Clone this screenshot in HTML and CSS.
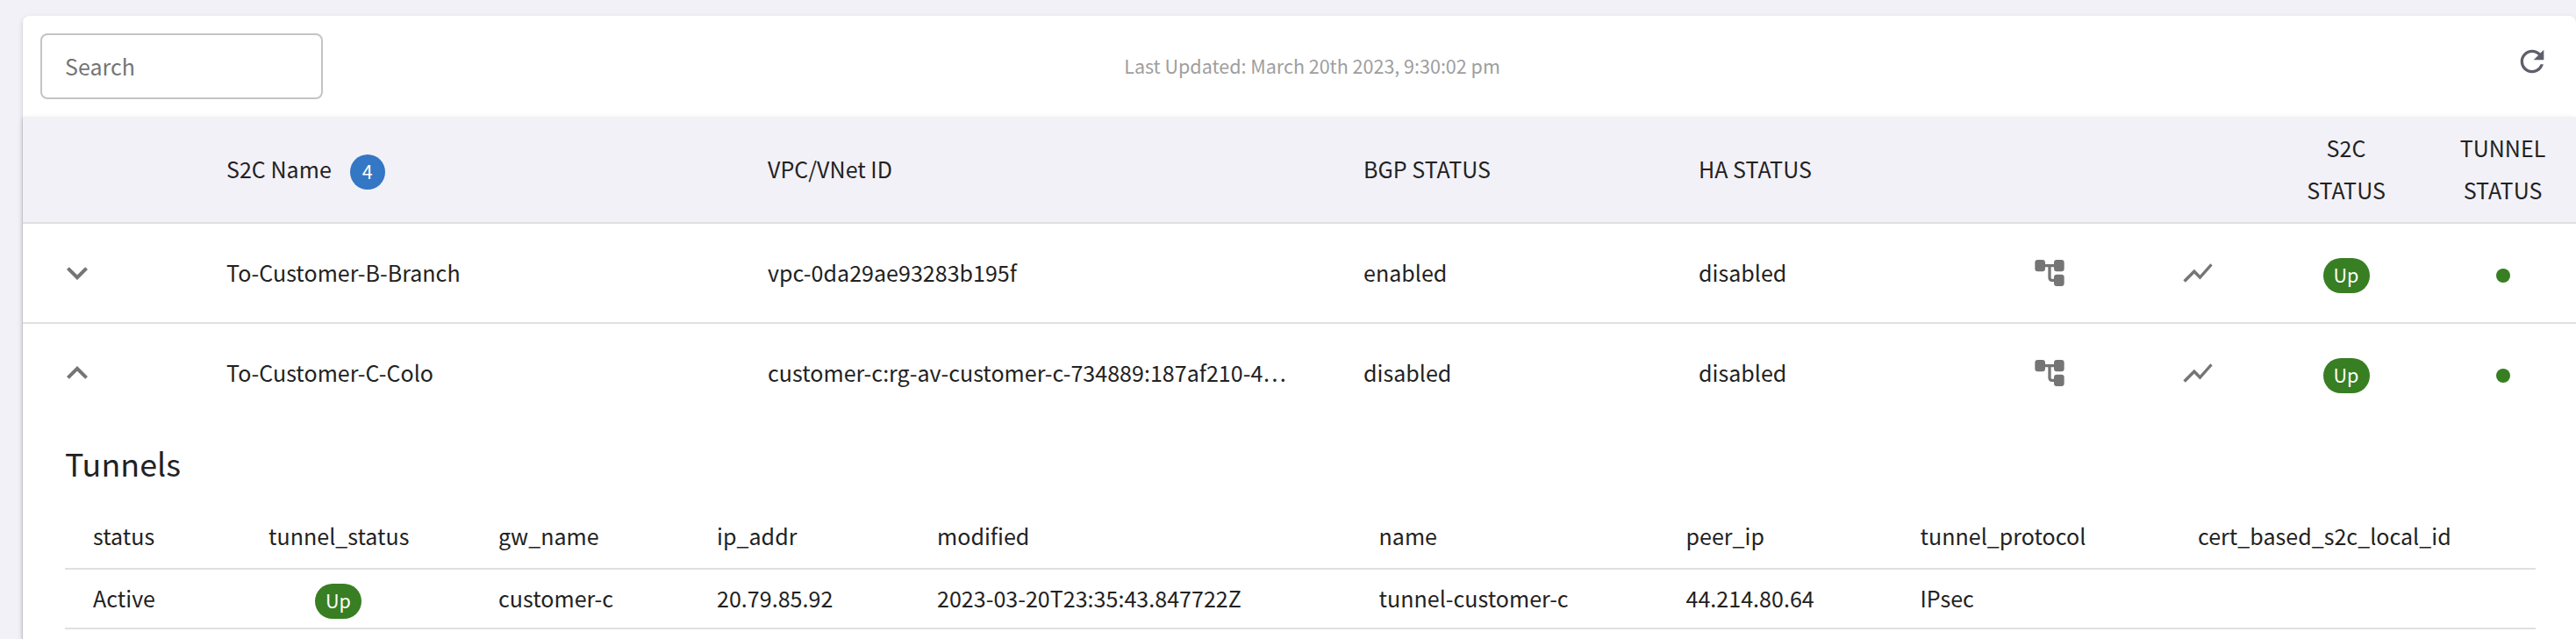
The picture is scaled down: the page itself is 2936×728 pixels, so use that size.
FILE: index.html
```html
<!DOCTYPE html>
<html lang="en">
<head>
<meta charset="utf-8">
<title>Site2Cloud Connections</title>
<link rel="stylesheet" href="styles.css">
</head>
<body>
<svg class="sprite" width="0" height="0" aria-hidden="true">
  <symbol id="tree" viewBox="0 0 24 24"><path d="M22 9.200V4.800C22 3.700 21.300 3 20.200 3h-3.400C15.700 3 15 3.700 15 4.800V6H9V4.800C9 3.700 8.300 3 7.200 3H3.800C2.700 3 2 3.700 2 4.800v4.400C2 10.300 2.700 11 3.800 11h3.400C8.300 11 9 10.300 9 9.200V8h2v7.300C11 16.900 12.100 18 13.700 18H15v1.200c0 1.100.7 1.800 1.800 1.800h3.400c1.100 0 1.800-.7 1.800-1.800v-4.400c0-1.100-.7-1.800-1.800-1.800h-3.400c-1.100 0-1.800.7-1.800 1.800V16h-1.300c-.4 0-.7-.3-.7-.7V8h2v1.200c0 1.100.7 1.800 1.800 1.800h3.400c1.100 0 1.800-.7 1.800-1.800z"/></symbol>
  <symbol id="chart" viewBox="0 0 24 24"><path d="M3.500 18.490l6-6.010 4 4L22 6.920l-1.410-1.410-7.090 7.970-4-4L2 16.990z"/></symbol>
  <symbol id="down" viewBox="0 0 24 24"><path d="M7.410 8.590L12 13.170l4.590-4.580L18 10l-6 6-6-6z"/></symbol>
  <symbol id="up" viewBox="0 0 24 24"><path d="M7.410 15.410L12 10.830l4.590 4.580L18 14l-6-6-6 6z"/></symbol>
  <symbol id="refresh" viewBox="0 0 24 24"><path d="M17.650 6.350C16.200 4.900 14.210 4 12 4c-4.420 0-7.990 3.580-7.990 8s3.570 8 7.990 8c3.730 0 6.840-2.550 7.730-6h-2.080c-.82 2.330-3.040 4-5.650 4-3.310 0-6-2.690-6-6s2.690-6 6-6c1.660 0 3.140.69 4.220 1.780L13 11h7V4z"/></symbol>
</svg>
<main class="card">
  <header class="toolbar">
    <input class="search" type="text" placeholder="Search" aria-label="Search">
    <span class="updated">Last Updated: March 20th 2023, 9:30:02 pm</span>
    <svg class="icon refresh"><use href="#refresh"/></svg>
  </header>
  <section class="table">
    <div class="row head">
      <span></span>
      <span class="name">S2C Name <b class="count">4</b></span>
      <span>VPC/VNet ID</span>
      <span>BGP STATUS</span>
      <span>HA STATUS</span>
      <span></span>
      <span></span>
      <span class="center">S2C<br>STATUS</span>
      <span class="center">TUNNEL<br>STATUS</span>
    </div>
    <div class="row">
      <svg class="chevron"><use href="#down"/></svg>
      <span>To-Customer-B-Branch</span>
      <span class="vpc">vpc-0da29ae93283b195f</span>
      <span>enabled</span>
      <span>disabled</span>
      <svg class="icon"><use href="#tree"/></svg>
      <svg class="icon"><use href="#chart"/></svg>
      <span class="pill">Up</span>
      <i class="dot"></i>
    </div>
    <div class="row open">
      <svg class="chevron"><use href="#up"/></svg>
      <span>To-Customer-C-Colo</span>
      <span class="vpc">customer-c:rg-av-customer-c-734889:187af210-4…</span>
      <span>disabled</span>
      <span>disabled</span>
      <svg class="icon"><use href="#tree"/></svg>
      <svg class="icon"><use href="#chart"/></svg>
      <span class="pill">Up</span>
      <i class="dot"></i>
    </div>
    <div class="detail">
      <h2 class="title">Tunnels</h2>
      <div class="trow thead">
        <span>status</span>
        <span>tunnel_status</span>
        <span>gw_name</span>
        <span>ip_addr</span>
        <span>modified</span>
        <span>name</span>
        <span>peer_ip</span>
        <span>tunnel_protocol</span>
        <span>cert_based_s2c_local_id</span>
      </div>
      <div class="trow">
        <span>Active</span>
        <span class="pill">Up</span>
        <span>customer-c</span>
        <span>20.79.85.92</span>
        <span>2023-03-20T23:35:43.847722Z</span>
        <span>tunnel-customer-c</span>
        <span>44.214.80.64</span>
        <span>IPsec</span>
        <span></span>
      </div>
    </div>
  </section>
</main>
</body>
</html>
```
FILE: styles.css
```css
* { box-sizing: border-box; }

body {
  margin: 0;
  height: 728px;
  overflow: hidden;
  padding: 18px 0 0 26px;
  background: #f2f1f7;
  color: #222;
  font: 25px/48px "Noto Sans CJK SC", "Noto Sans", sans-serif;
  letter-spacing: 0.04px;
}

.sprite { position: absolute; }

.card,
.table {
  background: #fff;
  border-radius: 8px 8px 0 0;
  box-shadow: 0 4px 2px -2px rgba(0, 0, 0, .2), 0 2px 2px rgba(0, 0, 0, .14), 0 2px 6px rgba(0, 0, 0, .12);
}

.card { height: 710px; }
.table { height: 595px; border-radius: 0; }

.toolbar {
  display: grid;
  grid-template-columns: 1fr auto 1fr;
  height: 115px;
  padding: 0 30px 0 20px;
}

.search {
  width: 322px;
  height: 75px;
  margin-top: 20px;
  padding: 0 26px 2px;
  border: 2px solid #c4c4c4;
  border-radius: 8px;
  background: #fff;
  font: inherit;
  letter-spacing: inherit;
  outline: 0;
}

.search::placeholder { color: #757575; opacity: 1; }

.updated {
  margin: 33px 0 0 39px;
  color: #9e9e9e;
  font-size: 21.5px;
  letter-spacing: 0;
}

.icon { width: 40px; height: 40px; fill: #757575; }
.refresh { justify-self: end; margin-top: 32px; fill: #5f5f69; }

.row {
  display: grid;
  grid-template-columns: 232px 617px 679px 382px 380px 169px 89px 200px 157px;
  align-items: center;
  height: 114px;
  border-bottom: 2px solid #e0e0e0;
}

.row > span,
.trow > span { padding-bottom: 2px; }

.row.open { height: 112px; border: 0; }
.row.head { height: 122px; background: #f2f1f7; }

.chevron {
  width: 48px;
  height: 48px;
  margin-left: 38px;
  fill: #757575;
}

.name { display: flex; align-items: center; }

.count {
  width: 40px;
  height: 40px;
  margin: 8px 0 0 21px;
  border-radius: 50%;
  background: #3477c4;
  color: #fff;
  font-size: 21.500px;
  font-weight: 400;
  line-height: 37px;
  text-align: center;
}

.vpc { white-space: nowrap; }

.center { width: 120px; justify-self: center; text-align: center; }

.row > .pill,
.trow > .pill {
  justify-self: center;
  width: 53px;
  height: 40px;
  margin-top: 6px;
  padding: 0;
  border-radius: 20px;
  background: #387e22;
  color: #fff;
  font-size: 21.500px;
  line-height: 37px;
  text-align: center;
}

.trow > .pill { justify-self: start; margin-left: 53px; }

.dot {
  justify-self: center;
  width: 16px;
  height: 16px;
  margin-top: 6px;
  border-radius: 50%;
  background: #387e22;
}

.detail { padding: 0 46px 0 48px; }

.title {
  height: 94px;
  margin: 0;
  padding-top: 22px;
  font-size: 35.800px;
  font-weight: 400;
}

.trow {
  display: grid;
  grid-template-columns: 200px 262px 249px 251px 503.5px 350px 267px 316.5px 1fr;
  align-items: center;
  height: 68px;
  padding-left: 32px;
  border-bottom: 2px solid #e0e0e0;
}

.thead { height: 74px; }
```
